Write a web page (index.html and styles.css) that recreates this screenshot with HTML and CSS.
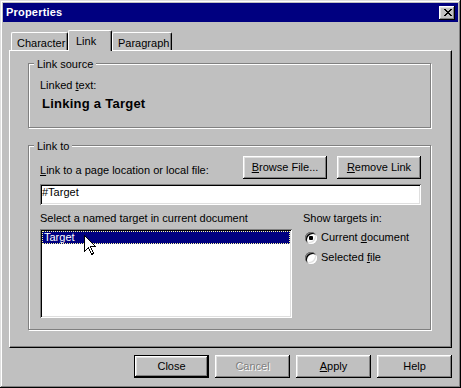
FILE: index.html
```html
<!DOCTYPE html>
<html>
<head>
<meta charset="utf-8">
<link rel="stylesheet" href="styles.css">
</head>
<body>
<div class="window">
  <div class="titlebar">
    <span class="title">Properties</span>
    <button class="btn close-btn" aria-label="Close">
      <svg width="8" height="7" viewBox="0 0 8 7" shape-rendering="crispEdges">
        <rect x="0" y="0" width="2" height="1" fill="#000"/>
        <rect x="6" y="0" width="2" height="1" fill="#000"/>
        <rect x="1" y="1" width="2" height="1" fill="#000"/>
        <rect x="5" y="1" width="2" height="1" fill="#000"/>
        <rect x="2" y="2" width="4" height="1" fill="#000"/>
        <rect x="3" y="3" width="2" height="1" fill="#000"/>
        <rect x="2" y="4" width="4" height="1" fill="#000"/>
        <rect x="1" y="5" width="2" height="1" fill="#000"/>
        <rect x="5" y="5" width="2" height="1" fill="#000"/>
        <rect x="0" y="6" width="2" height="1" fill="#000"/>
        <rect x="6" y="6" width="2" height="1" fill="#000"/>
      </svg>
    </button>
  </div>

  <div class="tabs">
    <div class="tab tab-character">Character</div>
    <div class="tab tab-link active">Link</div>
    <div class="tab tab-paragraph">Paragraph</div>
  </div>

  <div class="panel">
    <div class="group group-source">
      <div class="legend">Link source</div>
      <div class="field-label">Linked <u>t</u>ext:</div>
      <div class="linked-text">Linking a Target</div>
    </div>

    <div class="group group-linkto">
      <div class="legend">Link to</div>
      <div class="top-row">
        <div class="row-label"><u>L</u>ink to a page location or local file:</div>
        <div class="top-buttons">
          <button class="btn wide"><u>B</u>rowse File...</button>
          <button class="btn wide"><u>R</u>emove Link</button>
        </div>
      </div>
      <div class="textbox">#Target</div>
      <div class="lower-row">
        <div class="list-col">
          <div class="col-label">Select a named target in current document</div>
          <div class="listbox">
            <div class="list-item selected">Target</div>
            <svg class="cursor" width="12" height="20" viewBox="0 0 12 20" shape-rendering="crispEdges">
              <path d="M0.5 0.5 V16.5 L4.5 12.5 L7.5 19.5 L9.5 18.5 L6.5 11.5 H11.5 Z" fill="#fff" stroke="#000" stroke-width="1"/>
            </svg>
          </div>
        </div>
        <div class="radio-col">
          <div class="col-label">Show targets in:</div>
          <div class="radio-row first">
            <span class="radio checked"></span>
            <span>Current <u>d</u>ocument</span>
          </div>
          <div class="radio-row">
            <span class="radio"></span>
            <span>Selected <u>f</u>ile</span>
          </div>
        </div>
      </div>
    </div>
  </div>

  <div class="footer">
    <button class="btn footer-btn default">Close</button>
    <button class="btn footer-btn disabled">Cancel</button>
    <button class="btn footer-btn"><u>A</u>pply</button>
    <button class="btn footer-btn">Help</button>
  </div>
</div>
</body>
</html>
```

FILE: styles.css
```css
* {
  box-sizing: border-box;
}

html, body {
  margin: 0;
  padding: 0;
  background: #c0c0c0;
}

body {
  font-family: "Liberation Sans", Arial, sans-serif;
  font-size: 11px;
  line-height: 13px;
  color: #000;
}

u {
  text-decoration: underline;
  text-decoration-thickness: 1px;
  text-underline-offset: 1px;
}

.window {
  width: 461px;
  height: 388px;
  padding: 3px;
  background: #c0c0c0;
  box-shadow: inset -1px -1px #000, inset 1px 1px #dfdfdf, inset -2px -2px #808080, inset 2px 2px #fff;
}

/* Title bar */
.titlebar {
  height: 19px;
  background: #000080;
  display: flex;
  align-items: center;
  justify-content: space-between;
  padding: 0 3px 0 2px;
}

.title {
  color: #fff;
  font-weight: bold;
  letter-spacing: 0.2px;
  padding-left: 1px;
}

.btn {
  font: inherit;
  color: #000;
  background: #c0c0c0;
  border: none;
  padding: 0;
  margin: 0;
  box-shadow: inset -1px -1px #000, inset 1px 1px #fff, inset -2px -2px #808080, inset 2px 2px #dfdfdf;
  display: flex;
  align-items: center;
  justify-content: center;
  line-height: 13px;
}

.close-btn {
  width: 16px;
  height: 14px;
  padding: 0 0 1px 1px;
}

.close-btn svg {
  display: block;
}

/* Tabs */
.tabs {
  display: flex;
  align-items: flex-end;
  height: 20px;
  margin: 8px 0 0 8px;
  position: relative;
  z-index: 1;
}

.tab {
  height: 18px;
  background: #c0c0c0;
  border-top: 1px solid #fff;
  border-left: 1px solid #fff;
  border-right: 1px solid #000;
  box-shadow: inset -1px 0 #808080;
  border-radius: 2px 2px 0 0;
  padding: 4px 0 0 5px;
  white-space: nowrap;
}

.tab-character {
  width: 57px;
}

.tab-link {
  width: 44px;
}

.tab-paragraph {
  width: 60px;
}

.tab.active {
  height: 21px;
  margin-bottom: -1px;
  padding: 4px 0 0 7px;
}

/* Panel */
.panel {
  height: 298px;
  margin: 0 6px;
  border: 1px solid;
  border-color: #fff #000 #000 #fff;
  box-shadow: inset -1px -1px #808080;
  padding: 12px 20px 0 18px;
}

.group {
  border: 1px solid #808080;
  box-shadow: inset 1px 1px #fff, 1px 1px #fff;
  padding: 0 9px 0 11px;
}

.group-source {
  height: 65px;
}

.group-linkto {
  height: 185px;
  margin-top: 17px;
}

.legend {
  display: table;
  margin: -6px 0 0 -6px;
  padding: 0 3px;
  background: #c0c0c0;
}

.field-label {
  margin-top: 8px;
}

.linked-text {
  margin: 4px 0 0 2px;
  font-size: 13px;
  line-height: 16px;
  font-weight: bold;
  letter-spacing: 0.25px;
}

/* Link to */
.top-row {
  display: flex;
  align-items: flex-end;
  justify-content: space-between;
  margin-top: 3px;
}

.row-label {
  margin-bottom: 2px;
}

.top-buttons {
  display: flex;
  gap: 10px;
}

.btn.wide {
  width: 84px;
  height: 23px;
}

.textbox {
  margin-top: 5px;
  height: 21px;
  background: #fff;
  padding: 2px 2px;
  box-shadow: inset 1px 1px #808080, inset -1px -1px #fff, inset 2px 2px #000, inset -2px -2px #dfdfdf;
}

.lower-row {
  display: flex;
  gap: 11px;
  margin-top: 7px;
}

.list-col {
  width: 252px;
}

.listbox {
  position: relative;
  margin-top: 4px;
  height: 89px;
  background: #fff;
  padding: 2px;
  box-shadow: inset 1px 1px #808080, inset -1px -1px #fff, inset 2px 2px #000, inset -2px -2px #dfdfdf;
}

.list-item {
  height: 13px;
  line-height: 11px;
  padding: 0 0 0 1px;
}

.list-item.selected {
  background: #000080;
  color: #fff;
  border: 1px dotted #ffffa0;
}

.cursor {
  position: absolute;
  left: 44px;
  top: 6px;
}

.radio-col {
  flex: 1;
}

.radio-row {
  display: flex;
  align-items: center;
  gap: 4px;
  height: 13px;
  margin: 7px 0 0 2px;
}

.radio-row.first {
  margin-top: 6px;
}

.radio {
  position: relative;
  width: 12px;
  height: 12px;
  border-radius: 50%;
  background: #fff;
  box-shadow: inset 1px 1px #808080, inset -1px -1px #fff, inset 2px 2px #000, inset -2px -2px #dfdfdf;
}

.radio.checked::after {
  content: "";
  position: absolute;
  left: 4px;
  top: 4px;
  width: 4px;
  height: 4px;
  border-radius: 1px;
  background: #000;
}

/* Footer */
.footer {
  display: flex;
  justify-content: flex-end;
  gap: 6px;
  padding: 7px 6px 0 0;
}

.btn.footer-btn {
  width: 75px;
  height: 23px;
}

.btn.default {
  border: 1px solid #000;
}

.btn.disabled {
  color: #808080;
  text-shadow: 1px 1px 0 #fff;
}
```
